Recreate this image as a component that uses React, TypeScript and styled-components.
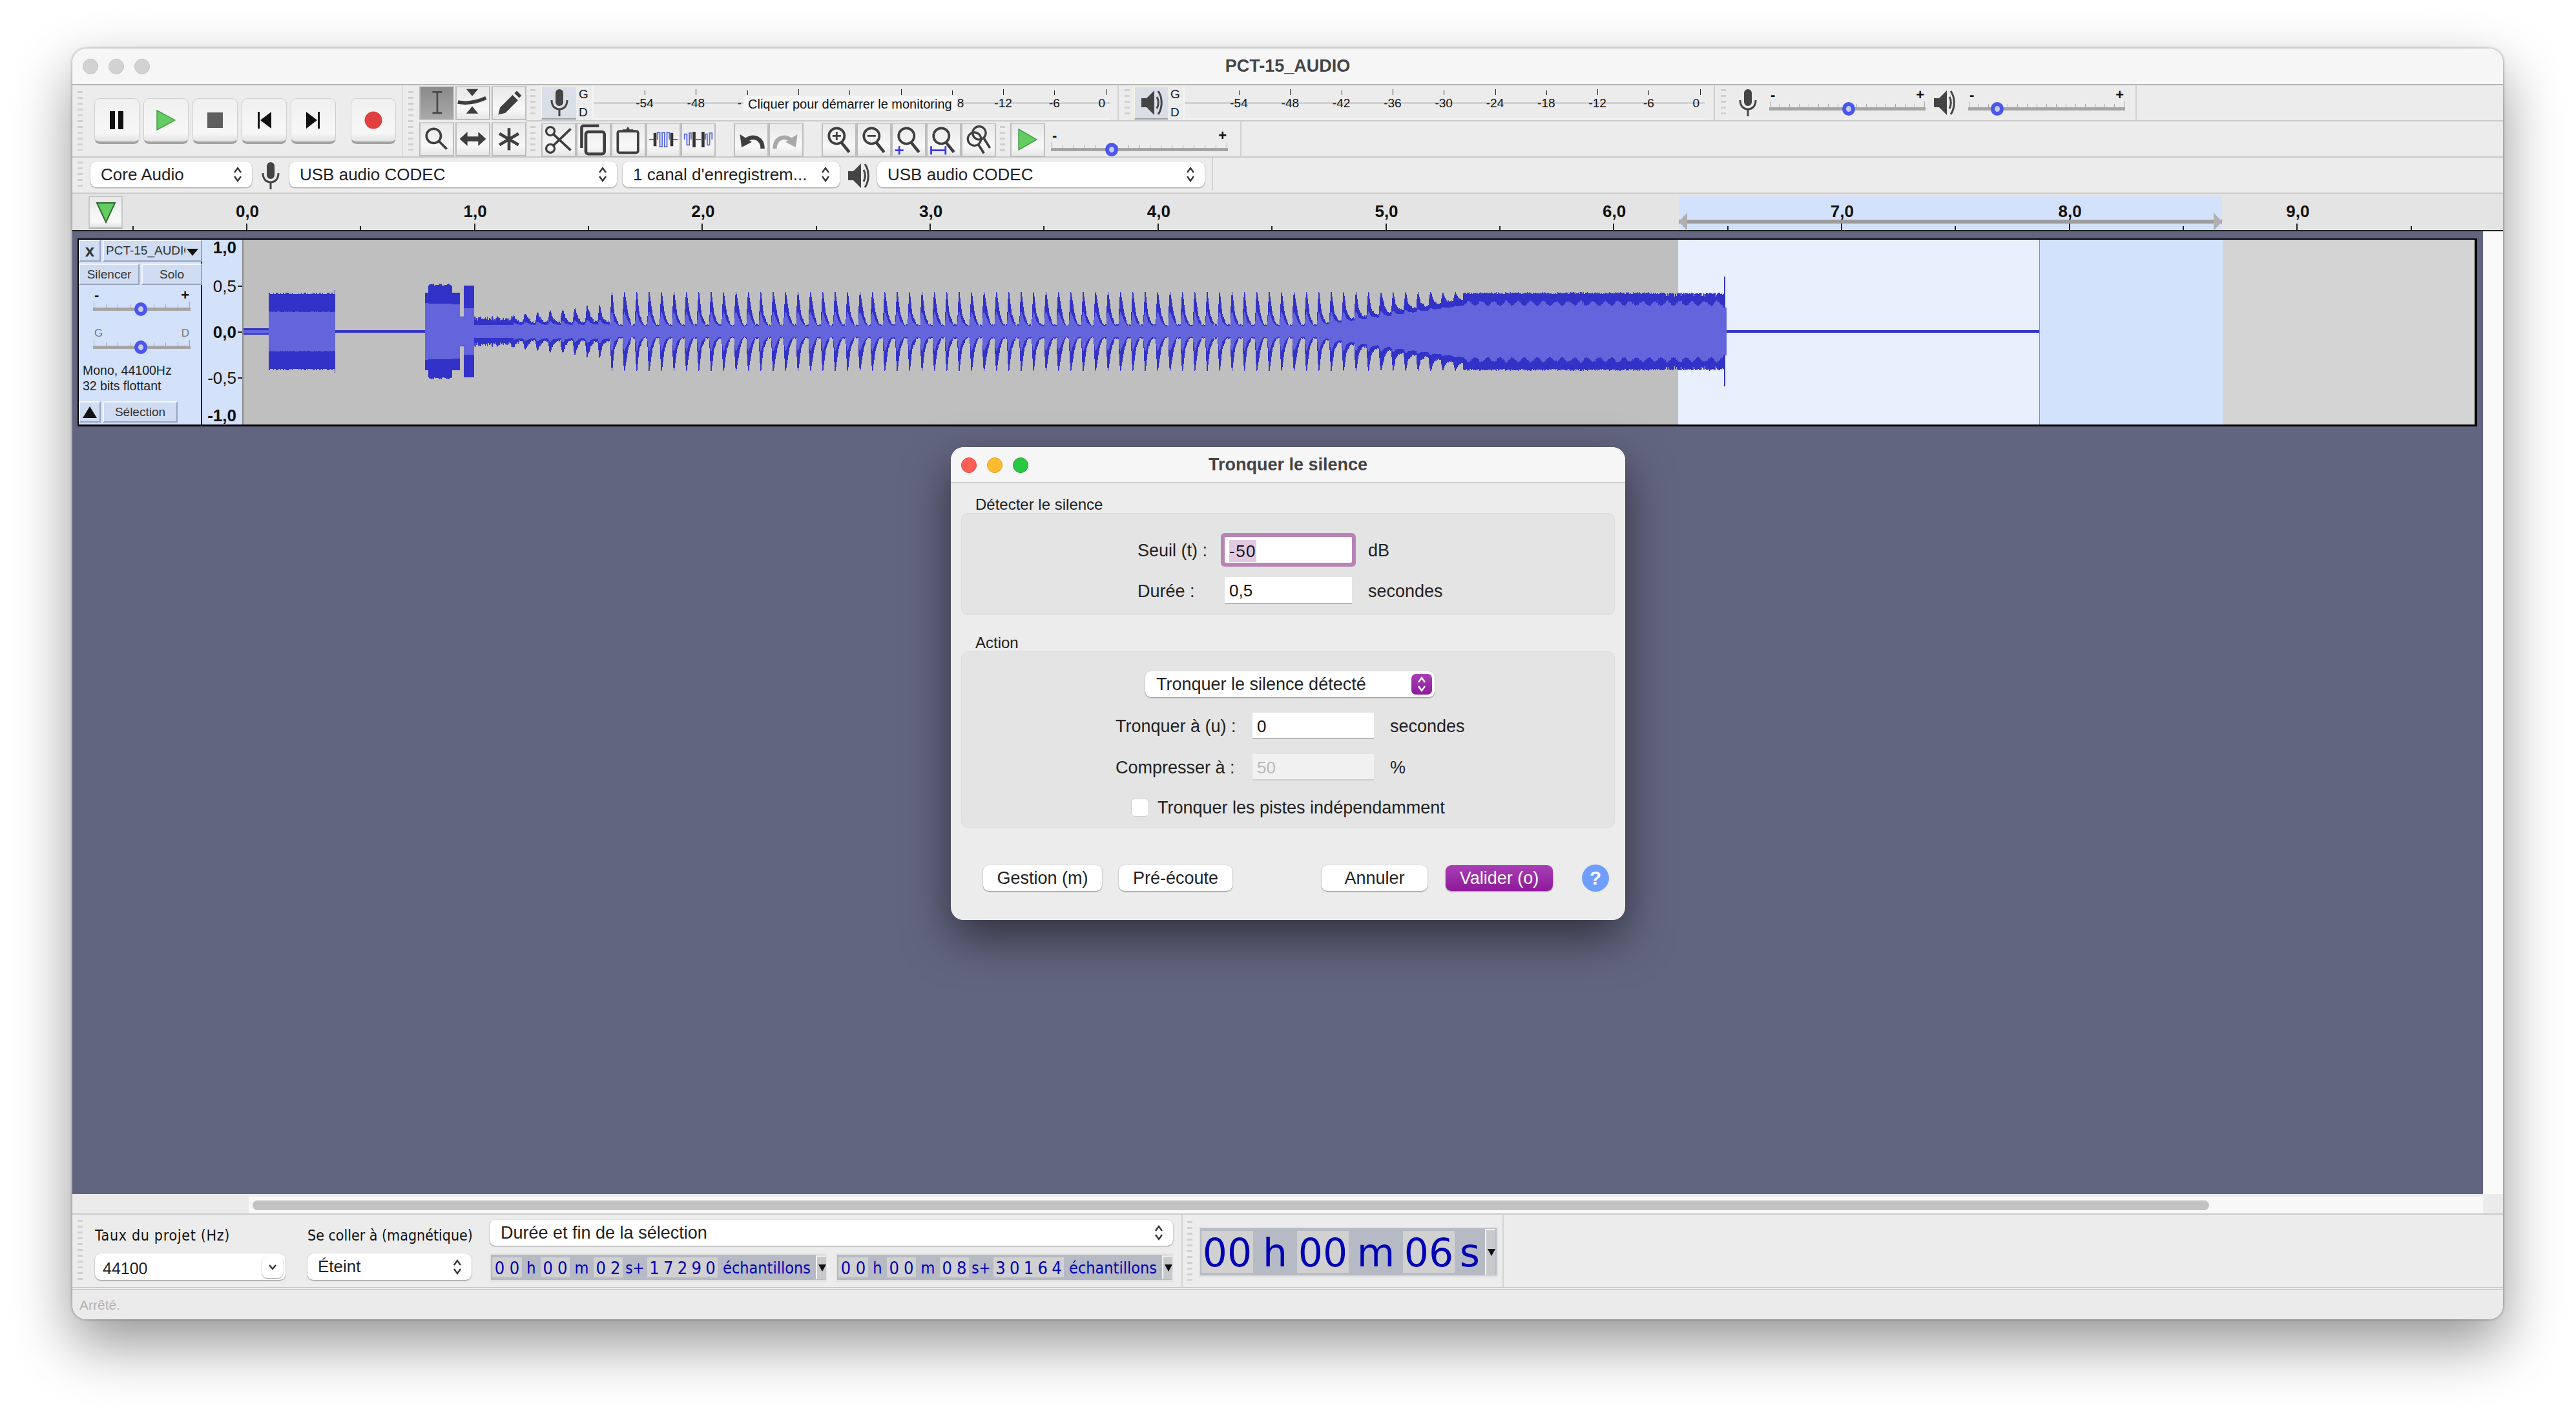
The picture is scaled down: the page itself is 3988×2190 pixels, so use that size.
import React from "react";
import styled, { createGlobalStyle } from "styled-components";

const GlobalStyle = createGlobalStyle`
  html, body {
    margin: 0;
    padding: 0;
    width: 3988px;
    height: 2190px;
    overflow: hidden;
    background: #fff;
    font-family: "Liberation Sans", Arial, sans-serif;
    color: #222;
  }
  * { box-sizing: border-box; }
`;

const Page = styled.div`
  width: 3988px;
  height: 2190px;
  padding: 75px 0 0 112px;
`;
const Win = styled.div`
  position: relative;
  width: 3763px;
  height: 1967px;
  display: flex;
  flex-direction: column;
  background: #ececec;
  border-radius: 22px;
  overflow: hidden;
`;
const WinShadow = styled.div`
  width: 3763px;
  border-radius: 22px;
  box-shadow: 0 38px 90px rgba(0, 0, 0, 0.42), 0 0 4px rgba(0, 0, 0, 0.45);
`;
const TitleBar = styled.div`
  height: 57px;
  flex: none;
  display: flex;
  align-items: center;
  justify-content: center;
  position: relative;
  background: #f6f6f6;
  border-bottom: 2px solid #b4b4b4;
  font-size: 27px;
  font-weight: 700;
  color: #444;
`;
const Lights = styled.div`
  position: absolute;
  left: 16px;
  top: 16px;
  display: flex;
  gap: 16px;
`;
const Light = styled.span<{ $c: string; $b: string }>`
  width: 24px;
  height: 24px;
  border-radius: 50%;
  background: ${(p) => p.$c};
  border: 1px solid ${(p) => p.$b};
`;

/* ---- top docks ---- */
const Grip = styled.div<{ $h: number; $mr: number }>`
  width: 8px;
  height: ${(p) => p.$h}px;
  flex: none;
  margin-right: ${(p) => p.$mr}px;
  background: repeating-linear-gradient(#d0d0d0 0 3px, transparent 3px 9px);
`;
const TopDock = styled.div`
  height: 112px;
  flex: none;
  display: flex;
  border-bottom: 2px solid #cbcbcb;
`;
const TransportBar = styled.div`
  width: 512px;
  flex: none;
  display: flex;
  align-items: center;
  padding-left: 8px;
  border-right: 1px solid #d4d4d4;
`;
const TransportBtn = styled.button<{ $ml?: number }>`
  width: 70px;
  height: 71px;
  flex: none;
  margin-left: ${(p) => p.$ml ?? 6}px;
  padding: 0;
  display: flex;
  align-items: center;
  justify-content: center;
  border: 1px solid #cfcfcf;
  border-bottom: 4px solid #a2a2a2;
  border-radius: 9px;
  background: linear-gradient(#f0f0f0, #f7f7f7 80%, #e2e2e2);
`;
const ToolsBar = styled.div`
  width: 191px;
  flex: none;
  display: flex;
  align-items: center;
  padding-left: 8px;
  border-right: 1px solid #d4d4d4;
`;
const ToolsGrid = styled.div`
  display: grid;
  grid-template-columns: repeat(3, 54px);
  grid-auto-rows: 53px;
  gap: 3px 2px;
`;
const IconBtn = styled.button<{ $on?: boolean; $w?: number; $h?: number }>`
  width: ${(p) => p.$w ?? 54}px;
  height: ${(p) => p.$h ?? 53}px;
  flex: none;
  padding: 0;
  display: flex;
  align-items: center;
  justify-content: center;
  border: 2px solid #bdbdbd;
  border-top-color: #cdcdcd;
  background: ${(p) =>
    p.$on
      ? "linear-gradient(#8a8a8a, #a9a9a9)"
      : "linear-gradient(#e9e9e9, #f8f8f8 70%, #e6e6e6)"};
`;
const RightCol = styled.div`
  flex: 1;
  display: flex;
  flex-direction: column;
  min-width: 0;
`;
const DockRow = styled.div`
  height: 56px;
  flex: none;
  display: flex;
  align-items: center;
  border-bottom: 2px solid #cbcbcb;
  &:last-child {
    border-bottom: 0;
  }
`;
const Bar = styled.div<{ $w: number; $pl?: number }>`
  width: ${(p) => p.$w}px;
  height: 100%;
  flex: none;
  display: flex;
  align-items: center;
  padding-left: ${(p) => p.$pl ?? 6}px;
  border-right: 2px solid #d0d0d0;
`;
const MeterBtn = styled.div<{ $w: number }>`
  width: ${(p) => p.$w}px;
  height: 52px;
  flex: none;
  display: flex;
  align-items: center;
  justify-content: center;
  background: #d9dee7;
  border-top: 1px solid #f8f6e4;
  border-left: 1px solid #f8f6e4;
  border-bottom: 2px solid #9a9ca3;
`;
const ChannelCol = styled.div<{ $w: number }>`
  width: ${(p) => p.$w}px;
  flex: none;
  display: flex;
  flex-direction: column;
  gap: 9px;
  padding-left: 4px;
  font-size: 19px;
  line-height: 19px;
  color: #111;
`;
const Scale = styled.div<{ $w: number }>`
  position: relative;
  width: ${(p) => p.$w}px;
  height: 52px;
  flex: none;
  border-left: 2px solid #f4f4f4;
  border-bottom: 2px solid #f4f4f4;
  &::before {
    content: "";
    position: absolute;
    left: 0;
    right: 0;
    top: 25px;
    height: 3px;
    background: #d2d2d2;
  }
`;
const MeterTick = styled.i<{ $x: number; $tall: boolean }>`
  position: absolute;
  left: ${(p) => p.$x}px;
  top: ${(p) => (p.$tall ? 5 : 7)}px;
  width: 1px;
  height: ${(p) => (p.$tall ? 9 : 7)}px;
  background: #222;
`;
const MeterLabel = styled.span<{ $x: number }>`
  position: absolute;
  left: ${(p) => p.$x}px;
  top: 16px;
  transform: translateX(-50%);
  font-size: 19px;
  line-height: 22px;
  color: #111;
`;
const MonitorHint = styled.div`
  position: absolute;
  left: 232px;
  top: 16px;
  width: 331px;
  height: 23px;
  padding-left: 7px;
  background: #f5f5f5;
  font-size: 20px;
  line-height: 24px;
  color: #111;
  white-space: nowrap;
`;
const SliderBox = styled.div<{ $w: number; $mt?: number; $ml?: number }>`
  position: relative;
  width: ${(p) => p.$w}px;
  flex: none;
  margin-top: ${(p) => p.$mt ?? 0}px;
  margin-left: ${(p) => p.$ml ?? 0}px;
`;
const SliderEnds = styled.div<{ $soft?: boolean }>`
  display: flex;
  justify-content: space-between;
  height: 20px;
  padding: 0 2px;
  font-size: ${(p) => (p.$soft ? 17 : 22)}px;
  line-height: 20px;
  font-weight: ${(p) => (p.$soft ? 400 : 700)};
  color: ${(p) => (p.$soft ? "#777" : "#111")};
`;
const SliderTicks = styled.div`
  display: flex;
  justify-content: space-between;
  align-items: flex-end;
  height: 9px;
  padding: 0 1px;
`;
const SliderTick = styled.i<{ $end: boolean }>`
  width: 1px;
  height: ${(p) => (p.$end ? 9 : 5)}px;
  background: #a8a8a8;
`;
const SliderRail = styled.div`
  height: 5px;
  background: #a5a5a5;
`;
const SliderThumb = styled.span<{ $x: number }>`
  position: absolute;
  left: ${(p) => p.$x - 10}px;
  bottom: -8px;
  width: 20px;
  height: 21px;
  border-radius: 50%;
  border: 6px solid #4a56ee;
  background: #c7cbe8;
`;

const Slider = ({
  w,
  thumb,
  mt,
  ml,
  ticks = 17,
  left = "-",
  right = "+",
  soft,
}: {
  w: number;
  thumb: number;
  mt?: number;
  ml?: number;
  ticks?: number;
  left?: string;
  right?: string;
  soft?: boolean;
}) => (
  <SliderBox $w={w} $mt={mt} $ml={ml}>
    <SliderEnds $soft={soft}>
      <span>{left}</span>
      <span>{right}</span>
    </SliderEnds>
    <SliderTicks>
      {Array.from({ length: ticks }).map((_, i) => (
        <SliderTick key={i} $end={i === 0 || i === ticks - 1} />
      ))}
    </SliderTicks>
    <SliderRail />
    <SliderThumb $x={thumb} />
  </SliderBox>
);

const BtnGroup = styled.div<{ $ml?: number }>`
  display: flex;
  flex: none;
  margin-left: ${(p) => p.$ml ?? 0}px;
`;

const DeviceRow = styled.div`
  height: 56px;
  flex: none;
  display: flex;
  align-items: flex-start;
  padding: 6px 0 0 8px;
  border-bottom: 2px solid #cbcbcb;
`;
const DeviceEnd = styled.div`
  width: 13px;
  height: 50px;
  flex: none;
  margin-top: -6px;
  border-right: 2px solid #d0d0d0;
`;
const SelectBox = styled.div<{ $w: number; $h?: number; $pl?: number; $fs?: number }>`
  width: ${(p) => p.$w}px;
  height: ${(p) => p.$h ?? 40}px;
  flex: none;
  display: flex;
  align-items: center;
  justify-content: space-between;
  padding: 0 14px 0 ${(p) => p.$pl ?? 16}px;
  background: #fff;
  border-radius: 9px;
  box-shadow: 0 1px 2px rgba(0, 0, 0, 0.38), 0 0 1px rgba(0, 0, 0, 0.2);
  font-size: ${(p) => p.$fs ?? 26}px;
  color: #222;
  white-space: nowrap;
`;
const RateText = styled.span`
  padding-top: 5px;
`;
const DeviceIcon = styled.div`
  width: 58px;
  height: 44px;
  flex: none;
  display: flex;
  align-items: center;
  justify-content: center;
`;
const DeviceGap = styled.div`
  width: 9px;
  flex: none;
`;

const RulerRow = styled.div`
  position: relative;
  height: 58px;
  flex: none;
  padding: 3px 0 0 25px;
  background: #e4e4e4;
  border-bottom: 2px solid #222;
`;
const RulerSel = styled.div`
  position: absolute;
  left: 2487px;
  top: 4px;
  width: 841px;
  bottom: 0;
  background: #d3e2fc;
`;
const SelSpan = styled.div`
  position: absolute;
  left: 0;
  right: 0;
  top: 36px;
  height: 6px;
  background: #9c9c9c;
  &::before,
  &::after {
    content: "";
    position: absolute;
    top: -11px;
    border-top: 14px solid transparent;
    border-bottom: 14px solid transparent;
  }
  &::before {
    left: 0;
    border-right: 13px solid #b0b0b0;
  }
  &::after {
    right: 0;
    border-left: 13px solid #b0b0b0;
  }
`;
const SpeedBtn = styled.div`
  width: 53px;
  height: 51px;
  display: flex;
  align-items: center;
  justify-content: center;
  background: linear-gradient(#e8e8e8, #fafafa 80%, #e2e2e2);
  border: 2px solid #c8c8c8;
  border-bottom-color: #b0b0b0;
`;
const RulerTick = styled.i<{ $x: number; $major: boolean }>`
  position: absolute;
  left: ${(p) => p.$x}px;
  bottom: 0;
  width: 2px;
  height: ${(p) => (p.$major ? 10 : 6)}px;
  background: #222;
`;
const RulerLabel = styled.span<{ $x: number }>`
  position: absolute;
  left: ${(p) => p.$x}px;
  top: 12px;
  transform: translateX(-50%);
  font-size: 26px;
  line-height: 30px;
  font-weight: 700;
  color: #111;
`;

/* ---- tracks ---- */
const TrackRegion = styled.div`
  flex: 1;
  display: flex;
  min-height: 0;
`;
const TrackPanel = styled.div`
  flex: 1;
  padding: 11px 0 0 8px;
  background: #62657f;
`;
const VScroll = styled.div`
  width: 31px;
  flex: none;
  background: #fafafa;
  border-left: 1px solid #ececec;
`;
const Track = styled.div`
  width: 3715px;
  height: 291px;
  display: flex;
  background: #d3e1fb;
  border: solid #000;
  border-width: 2px 4px 3px 2px;
`;
const LabelPanel = styled.div`
  width: 191px;
  flex: none;
  display: flex;
  flex-direction: column;
  background: #d3e1fb;
  border-right: 2px solid #222;
  color: #333;
  font-size: 19px;
`;
const LabelRow = styled.div<{ $h: number; $mb?: number }>`
  height: ${(p) => p.$h}px;
  flex: none;
  display: flex;
  gap: 3px;
  margin-bottom: ${(p) => p.$mb ?? 3}px;
`;
const LabelBtn = styled.div<{ $w: number; $bold?: boolean }>`
  width: ${(p) => p.$w}px;
  flex: none;
  display: flex;
  align-items: center;
  justify-content: center;
  background: #cfdcf2;
  border: solid;
  border-width: 2px 2px 2px 2px;
  border-color: #f3f6fc #9aa5ba #9aa5ba #f3f6fc;
  font-weight: ${(p) => (p.$bold ? 700 : 400)};
  font-size: ${(p) => (p.$bold ? 26 : 19)}px;
  white-space: nowrap;
  overflow: hidden;
`;
const TrackName = styled(LabelBtn)`
  justify-content: flex-start;
  padding-left: 3px;
  position: relative;
  &::after {
    content: "";
    position: absolute;
    right: 0;
    top: 0;
    bottom: 0;
    width: 24px;
    background: #cfdcf2;
  }
  &::before {
    content: "";
    position: absolute;
    z-index: 1;
    right: 4px;
    top: 12px;
    border-left: 9px solid transparent;
    border-right: 9px solid transparent;
    border-top: 11px solid #111;
  }
`;
const GainWrap = styled.div`
  padding: 3px 0 0 22px;
`;
const FormatInfo = styled.div`
  margin: 21px 0 0 6px;
  height: 60px;
  font-size: 19.5px;
  line-height: 24px;
  color: #222;
  white-space: nowrap;
`;
const VRuler = styled.div`
  position: relative;
  width: 64px;
  flex: none;
  background: #d3e1fb;
  border-right: 2px solid #8c8c8c;
`;
const VLabel = styled.span<{ $y: number; $bold: boolean }>`
  position: absolute;
  right: 9px;
  top: ${(p) => p.$y}px;
  transform: translateY(-50%);
  font-size: 26px;
  font-weight: ${(p) => (p.$bold ? 700 : 400)};
  color: #111;
  line-height: 30px;
`;
const VTick = styled.i<{ $y: number }>`
  position: absolute;
  right: 0;
  top: ${(p) => p.$y}px;
  width: 7px;
  height: 2px;
  background: #222;
`;
const WaveArea = styled.div`
  position: relative;
  flex: 1;
  display: flex;
  min-width: 0;
`;
const WaveRange = styled.div<{ $w?: number; $c: string }>`
  ${(p) => (p.$w ? `width: ${p.$w}px; flex: none;` : "flex: 1;")}
  background: ${(p) => p.$c};
`;
const WaveSvg = styled.svg`
  position: absolute;
  left: 0;
  top: 0;
`;

/* ---- bottom ---- */
const HScrollRow = styled.div`
  height: 32px;
  flex: none;
  padding: 4px 0 2px 273px;
  background: #ebebeb;
  border-bottom: 2px solid #cbcbcb;
`;
const HTrack = styled.div`
  width: 3459px;
  height: 26px;
  padding: 6px;
  background: #f8f8f8;
`;
const HThumb = styled.div`
  width: 3029px;
  height: 15px;
  border-radius: 8px;
  background: #c2c2c2;
`;
const SelectionDock = styled.div`
  height: 116px;
  flex: none;
  display: flex;
  border-bottom: 4px double #c4c4c4;
`;
const SelSection = styled.div`
  width: 1719px;
  flex: none;
  display: flex;
  padding: 8px 0 0 8px;
  border-right: 2px solid #d4d4d4;
`;
const SelGrid = styled.div`
  display: grid;
  grid-template-columns: 296px 249px 1060px;
  grid-template-rows: 40px 44px;
  column-gap: 33px;
  row-gap: 12px;
  margin-left: -1px;
`;
const SelLabel = styled.div<{ $ls?: number }>`
  font-family: "DejaVu Sans", sans-serif;
  font-size: 23px;
  font-stretch: condensed;
  letter-spacing: ${(p) => p.$ls ?? 0}px;
  line-height: 48px;
  color: #111;
  white-space: nowrap;
`;
const TimerRow = styled.div`
  display: flex;
  gap: 14px;
`;
const Timer = styled.div<{ $w: number; $h: number; $mt?: number }>`
  width: ${(p) => p.$w}px;
  height: ${(p) => p.$h}px;
  flex: none;
  display: flex;
  align-items: stretch;
  margin-top: ${(p) => p.$mt ?? 0}px;
  padding: 4px 2px 4px 2px;
  background: #b6bac4;
  border: 2px solid #e2e2e2;
  border-bottom-width: 3px;
  color: #0000b4;
  font-family: "DejaVu Sans", sans-serif;
`;
const TimerCell = styled.span<{ $w: number; $size: number; $cond?: boolean; $on?: boolean }>`
  width: ${(p) => p.$w}px;
  flex: none;
  display: flex;
  justify-content: space-around;
  align-items: center;
  padding-top: 2px;
  background: ${(p) => (p.$on ? "#d1d1d1" : "transparent")};
  font-size: ${(p) => p.$size}px;
  ${(p) => (p.$cond ? "font-stretch: condensed;" : "")}
  white-space: nowrap;
`;
const TimerDrop = styled.span`
  position: relative;
  width: 16px;
  flex: none;
  margin-top: -3px;
  margin-bottom: -3px;
  background: #c8c9cd;
  border-left: 2px solid #f4f4f4;
  border-top: 2px solid #f4f4f4;
  &::after {
    content: "";
    position: absolute;
    left: 2px;
    top: 50%;
    margin-top: -6px;
    border-left: 6px solid transparent;
    border-right: 6px solid transparent;
    border-top: 11px solid #111;
  }
`;
const ClockSection = styled.div`
  width: 497px;
  flex: none;
  display: flex;
  align-items: center;
  padding-left: 7px;
  border-right: 2px solid #d4d4d4;
`;
const StatusBar = styled.div`
  height: 46px;
  flex: none;
  padding-left: 11px;
  font-size: 21px;
  line-height: 48px;
  color: #b2b2b2;
  background: #ebebeb;
`;
const MiniChevron = styled.span`
  width: 32px;
  height: 34px;
  margin-right: -10px;
  display: flex;
  align-items: center;
  justify-content: center;
  border-radius: 8px;
  background: #fff;
  box-shadow: 0 1px 2px rgba(0, 0, 0, 0.4);
`;

/* ---- dialog ---- */
const Dialog = styled.div`
  position: absolute;
  left: 1360px;
  top: 617px;
  width: 1044px;
  height: 732px;
  background: #ececec;
  border-radius: 20px;
  overflow: hidden;
`;
const DialogShadow = styled.div`
  position: absolute;
  left: 1360px;
  top: 617px;
  width: 1044px;
  height: 732px;
  border-radius: 20px;
  box-shadow: 0 28px 70px rgba(0, 0, 0, 0.5);
`;
const DialogTitle = styled.div`
  position: relative;
  height: 56px;
  display: flex;
  align-items: center;
  justify-content: center;
  background: #f6f6f6;
  border-bottom: 2px solid #cdcdcd;
  font-size: 27px;
  font-weight: 700;
  color: #444;
`;
const DialogBody = styled.div`
  padding: 0 16px;
`;
const GroupLabel = styled.div<{ $h: number }>`
  height: ${(p) => p.$h}px;
  display: flex;
  align-items: flex-end;
  padding: 0 0 0 22px;
  font-size: 24px;
  line-height: 26px;
  color: #222;
`;
const GroupBox = styled.div<{ $h: number; $pt: number }>`
  height: ${(p) => p.$h}px;
  padding-top: ${(p) => p.$pt}px;
  background: #e4e4e4;
  border: 1px solid #dedede;
  border-radius: 10px;
`;
const FormRow = styled.div<{ $pl: number; $mb?: number; $lw: number }>`
  display: flex;
  align-items: center;
  padding-left: ${(p) => p.$pl}px;
  margin-bottom: ${(p) => p.$mb ?? 0}px;
  font-size: 27px;
  color: #222;
  & > label {
    width: ${(p) => p.$lw}px;
    flex: none;
    padding-top: 2px;
    white-space: nowrap;
  }
`;
const Unit = styled.span`
  padding-top: 2px;
`;
const TextField = styled.div<{ $w: number; $h: number; $off?: boolean; $focus?: boolean }>`
  width: ${(p) => p.$w}px;
  height: ${(p) => p.$h}px;
  flex: none;
  margin-right: 25px;
  padding: 3px 0 0 7px;
  display: flex;
  align-items: center;
  background: ${(p) => (p.$off ? "#f1f1f1" : "#fff")};
  color: ${(p) => (p.$off ? "#b9b9b9" : "#111")};
  font-size: 26px;
  border-bottom: 2px solid ${(p) => (p.$off ? "#cfcfcf" : "#b8b8b8")};
  ${(p) =>
    p.$focus
      ? "box-shadow: 0 0 0 6px #b784b5; border-radius: 2px; border-bottom: 0; position: relative;"
      : ""}
`;
const SelectedText = styled.span`
  background: #e2c8e3;
  line-height: 34px;
  letter-spacing: 1.5px;
`;
const PurpleCap = styled.span`
  width: 32px;
  height: 32px;
  margin-right: -10px;
  display: flex;
  align-items: center;
  justify-content: center;
  border-radius: 7px;
  background: linear-gradient(#a83fb5, #8e1a9a);
`;
const CheckBox = styled.span`
  width: 28px;
  height: 28px;
  flex: none;
  margin-right: 13px;
  background: #fff;
  border: 1px solid #d0d0d0;
  border-radius: 6px;
`;
const Footer = styled.div`
  display: flex;
  align-items: center;
  margin-top: 57px;
  padding-left: 34px;
`;
const DlgBtn = styled.button<{ $w: number; $ml?: number; $primary?: boolean }>`
  width: ${(p) => p.$w}px;
  height: 40px;
  flex: none;
  margin-left: ${(p) => p.$ml ?? 0}px;
  padding: 0;
  border: 0;
  border-radius: 9px;
  font: 27px "Liberation Sans", Arial, sans-serif;
  color: ${(p) => (p.$primary ? "#fff" : "#222")};
  background: ${(p) => (p.$primary ? "linear-gradient(#a83fb5, #8e1a9a)" : "#fff")};
  box-shadow: 0 1px 2px rgba(0, 0, 0, 0.38), 0 0 1px rgba(0, 0, 0, 0.2);
`;
const HelpBtn = styled.span`
  width: 42px;
  height: 42px;
  flex: none;
  margin-left: 45px;
  display: flex;
  align-items: center;
  justify-content: center;
  border-radius: 50%;
  background: #6f9eff;
  color: #fff;
  font-size: 30px;
  font-weight: 700;
`;

/* ---- drawings ---- */
const INK = "#3f3f3f";
const Glyph = ({ children, size = 54 }: { children: React.ReactNode; size?: number }) => (
  <svg width={size} height={size} viewBox="0 0 54 54" fill="none">
    {children}
  </svg>
);
const Mic = ({ w = 30, h = 44, c = "#444" }: { w?: number; h?: number; c?: string }) => (
  <svg width={w} height={h} viewBox="0 0 30 44" fill="none">
    <rect x="9" y="1" width="12" height="26" rx="6" fill={c} />
    <path d="M3 18c0 9 5 14 12 14s12-5 12-14" stroke={c} strokeWidth="3" />
    <path d="M15 32v11" stroke={c} strokeWidth="3" />
  </svg>
);
const Speaker = ({ w = 34, h = 44, c = "#444" }: { w?: number; h?: number; c?: string }) => (
  <svg width={w} height={h} viewBox="0 0 34 44" fill="none">
    <path d="M1 15h8L21 3v38L9 29H1z" fill={c} />
    <path d="M25 13c3 5 3 13 0 18M27 4c7 10 7 26 0 36" stroke={c} strokeWidth="3" />
  </svg>
);
const UpDown = ({ c = "#333" }: { c?: string }) => (
  <svg width="16" height="26" viewBox="0 0 16 26" fill="none">
    <path d="M3 10l5-7 5 7M3 16l5 7 5-7" stroke={c} strokeWidth="2.4" />
  </svg>
);
const Lens = ({ sw = 4 }: { sw?: number }) => (
  <>
    <circle cx="23" cy="21" r="13" stroke={INK} strokeWidth={sw} />
    <path d="M31 32l13 16" stroke={INK} strokeWidth={sw + 1} />
  </>
);

const icons: Record<string, React.ReactNode> = {
  ibeam: <path d="M20 9h16M28 9v35M20 44h16" stroke="#4a4a4a" strokeWidth="3" />,
  envelope: (
    <>
      <path d="M16 4h20L26 16zM16 45h20L26 33z" fill={INK} />
      <path d="M2 26c16 3 30 1 47-7" stroke={INK} strokeWidth="6" />
    </>
  ),
  pencil: (
    <path d="M9 47l3-12 21-21 9 9-21 21zM36 11l4-4 8 8-4 4z" fill={INK} />
  ),
  zoomTool: (
    <>
      <circle cx="22" cy="22" r="12" stroke={INK} strokeWidth="4" />
      <path d="M31 31l13 13" stroke={INK} strokeWidth="4" />
    </>
  ),
  slide: <path d="M5 27l13-12v8h18v-8l13 12-13 12v-8H18v8z" fill={INK} />,
  multi: <path d="M27 9v37M11 18l32 19M43 18L11 37" stroke={INK} strokeWidth="5" />,
  cut: (
    <>
      <circle cx="13" cy="13" r="7" stroke={INK} strokeWidth="3.5" />
      <circle cx="13" cy="42" r="7" stroke={INK} strokeWidth="3.5" />
      <path d="M18 18l29 27M18 37L47 9" stroke={INK} strokeWidth="4" />
    </>
  ),
  copy: (
    <>
      <rect x="14" y="14" width="31" height="37" rx="4" stroke={INK} strokeWidth="5" />
      <path d="M7 41V7a3 3 0 0 1 3-3h26" stroke={INK} strokeWidth="5" />
    </>
  ),
  paste: (
    <>
      <rect x="9" y="13" width="34" height="36" rx="3" stroke={INK} strokeWidth="4" />
      <path d="M17 15v-5h6l3-5 3 5h6v5z" fill={INK} />
    </>
  ),
  trim: (
    <>
      <path d="M3 27h9M42 27h9" stroke="#5a6be8" strokeWidth="2" />
      <path d="M13 16v22M41 16v22" stroke="#333" strokeWidth="5" />
      <path d="M17 27v-12h4v24h4V15h4v24h4V15h4v12" stroke="#5a6be8" strokeWidth="2" />
    </>
  ),
  silence: (
    <>
      <path d="M4 27v-9h4v18h4V16h3v11M39 27v-9h3v18h4V16h4v11" stroke="#5a6be8" strokeWidth="2" />
      <path d="M20 14v26M35 14v26" stroke="#333" strokeWidth="5" />
      <path d="M22 27h12" stroke="#5a6be8" strokeWidth="2" />
    </>
  ),
  undo: (
    <>
      <path d="M46 42c0-16-14-24-28-14" stroke={INK} strokeWidth="7" />
      <path d="M8 18l3 22 17-9z" fill={INK} />
    </>
  ),
  redo: (
    <>
      <path d="M8 42c0-16 14-24 28-14" stroke="#a8a8a8" strokeWidth="7" />
      <path d="M46 18l-3 22-17-9z" fill="#a8a8a8" />
    </>
  ),
  zoomIn: (
    <>
      <Lens />
      <path d="M23 14v14M16 21h14" stroke={INK} strokeWidth="3" />
    </>
  ),
  zoomOut: (
    <>
      <Lens />
      <path d="M16 21h14" stroke={INK} strokeWidth="3" />
    </>
  ),
  zoomSel: (
    <>
      <Lens />
      <path d="M11 38v14M4 45h14" stroke="#3a3ae0" strokeWidth="3" />
    </>
  ),
  zoomFit: (
    <>
      <Lens />
      <path d="M6 38v14M30 38v14M6 45h24" stroke="#3a3ae0" strokeWidth="3" />
    </>
  ),
  zoomToggle: (
    <>
      <circle cx="28" cy="16" r="11" stroke={INK} strokeWidth="3.5" />
      <circle cx="20" cy="26" r="11" stroke={INK} strokeWidth="3.5" />
      <path d="M27 36l9 14M36 25l10 16" stroke={INK} strokeWidth="4" />
    </>
  ),
};

const Tool = ({ name, on, w, h }: { name: string; on?: boolean; w?: number; h?: number }) => (
  <IconBtn $on={on} $w={w} $h={h}>
    <Glyph>{icons[name]}</Glyph>
  </IconBtn>
);

const PlayGlyph = ({ h = 32 }: { h?: number }) => (
  <svg width="30" height={h} viewBox="0 0 30 32" preserveAspectRatio="none">
    <path d="M1 1l28 15L1 31z" fill="#63cc63" stroke="#4a9f4a" strokeWidth="1.5" />
  </svg>
);

/* waveform, same random sequence on every run */
const noise = (x: number) => {
  const s = Math.sin(x * 12.9898) * 43758.5453;
  return s - Math.floor(s);
};
const burstShape = (x: number) => {
  const q = (((x - 944) % 19.2) + 19.2) % 19.2;
  const p = q / 19.2;
  const skew = 0.85 + 0.3 * noise(Math.floor((x - 944) / 19.2));
  if (p < 0.12) return Math.pow(p / 0.12, 0.7);
  if (p < 0.18) return 1;
  if (p < 0.42 * skew) return 1 - ((p - 0.18) / (0.42 * skew - 0.18)) * 0.68;
  if (p < 0.72) return 0.32 * (1 - (p - 0.42 * skew) / (0.72 - 0.42 * skew));
  return 0;
};
const envelope = (x: number): [number, number] => {
  const n = noise(x);
  const m = noise(x + 311);
  if (x < 416) return [5, 2.5];
  if (x < 519) return [x === 518 ? 64 : 58 + (n > 0.7 ? 2 : 0), 30 + m];
  if (x < 658) return [1.8, 1];
  if (x < 663) return [60, 44];
  if (x < 700) return [71 + (Math.floor(x / 4) % 3) + n, 43];
  if (x < 712) return [60, 42];
  if (x < 718) return [23, 22];
  if (x < 734) return [71, 36];
  if (x < 795) return [17 + 7 * n, 10];
  if (x < 944) {
    const t = (x - 795) / 149;
    const top = 24 + 16 * t;
    const peak = 13 + (top - 13) * burstShape(x) + 4 * n;
    return [peak, 10 + (peak - 13) * 0.3];
  }
  if (x < 2265) {
    const t = x < 2035 ? 0 : (x - 2035) / 230;
    const low = 9 + 40 * t;
    const b = burstShape(x);
    const peak = low + (61 - low) * b + 3 * n * (1 - b) - 2 * m * t;
    return [Math.min(peak, 61), 8 + 32 * t + (peak - low) * 0.42 * (1 - t * 0.8)];
  }
  if (x < 2668) {
    const chop = x > 2560 && n > 0.72 ? 7 * m : 0;
    const bump = 5 * Math.sin(((x - 944) / 19.2) * 2 * Math.PI);
    const rms = 42 + bump * 0.7 + 3 * n;
    return [58 + 3 * n - chop, Math.min(rms, 50)];
  }
  if (x < 2671) return [x >= 2669 ? 85 : 58, 36];
  if (x < 2673) return [37, 37];
  return [1.8, 1];
};
const buildPaths = () => {
  const cy = 142;
  let dark = "";
  let light = "";
  for (let x = 377; x < 3157; x++) {
    const [peak, rms] = envelope(x);
    const px = x - 377 + 0.5;
    dark += `M${px} ${(cy - peak).toFixed(1)}V${(cy + peak).toFixed(1)}`;
    if (rms > 1) light += `M${px} ${(cy - rms).toFixed(1)}V${(cy + rms).toFixed(1)}`;
  }
  return { dark, light };
};
const wavePaths = buildPaths();

const METER_DB = ["-54", "-48", "-42", "-36", "-30", "-24", "-18", "-12", "-6", "0"];

const MeterScale = ({
  w,
  start,
  labels,
  children,
}: {
  w: number;
  start: number;
  labels: string[];
  children?: React.ReactNode;
}) => (
  <Scale $w={w}>
    {labels.map((db, i) => {
      const x = start + 79.3 * i;
      return (
        <React.Fragment key={i}>
          <MeterTick $x={x} $tall={i % 2 === 1 || i === 9} />
          {db && <MeterLabel $x={db === "0" ? x - 6 : x}>{db}</MeterLabel>}
        </React.Fragment>
      );
    })}
    {children}
  </Scale>
);

const RULER_ZERO = 269;
const RULER_STEP = 352.7;
const rulerTicks = Array.from({ length: 21 })
  .map((_, i) => ({
    x: RULER_ZERO - RULER_STEP / 2 + (i * RULER_STEP) / 2,
    major: i % 2 === 1,
  }))
  .filter((t) => t.x < 3750);
const rulerLabels = ["0,0", "1,0", "2,0", "3,0", "4,0", "5,0", "6,0", "7,0", "8,0", "9,0"];

const SmallTimer = ({ sec, samples }: { sec: string; samples: string }) => {
  const digits = (s: string, w: number) => (
    <TimerCell $w={w} $size={27} $cond $on>
      {s.split("").map((d, i) => (
        <span key={i}>{d}</span>
      ))}
    </TimerCell>
  );
  return (
    <Timer $w={522} $h={44}>
      {digits("00", 46)}
      <TimerCell $w={29} $size={25} $cond>h</TimerCell>
      {digits("00", 45)}
      <TimerCell $w={37} $size={25} $cond>m</TimerCell>
      {digits(sec, 45)}
      <TimerCell $w={38} $size={24} $cond>s+</TimerCell>
      {digits(samples, 109)}
      <TimerCell $w={152} $size={25} $cond>échantillons</TimerCell>
      <TimerDrop />
    </Timer>
  );
};

const App = () => (
  <Page>
    <GlobalStyle />
    <WinShadow>
      <Win>
        <TitleBar>
          <Lights>
            <Light $c="#d2d2d2" $b="#c4c4c4" />
            <Light $c="#d2d2d2" $b="#c4c4c4" />
            <Light $c="#d2d2d2" $b="#c4c4c4" />
          </Lights>
          PCT-15_AUDIO
        </TitleBar>

        <TopDock>
          <TransportBar>
            <Grip $h={92} $mr={12} />
            <TransportBtn $ml={6}>
              <svg width="26" height="28" viewBox="0 0 26 28">
                <path d="M2 0h8v28H2zM15 0h8v28h-8z" fill="#111" />
              </svg>
            </TransportBtn>
            <TransportBtn>
              <PlayGlyph />
            </TransportBtn>
            <TransportBtn>
              <svg width="26" height="26" viewBox="0 0 26 26">
                <rect width="24" height="24" x="1" y="1" fill="#5f5f5f" />
              </svg>
            </TransportBtn>
            <TransportBtn>
              <svg width="26" height="26" viewBox="0 0 26 26">
                <path d="M3 0h3v26H3zM24 0v26L7 13z" fill="#111" />
              </svg>
            </TransportBtn>
            <TransportBtn>
              <svg width="26" height="26" viewBox="0 0 26 26">
                <path d="M20 0h3v26h-3zM2 0v26l17-13z" fill="#111" />
              </svg>
            </TransportBtn>
            <TransportBtn $ml={23}>
              <svg width="28" height="28" viewBox="0 0 28 28">
                <circle cx="14" cy="14" r="13.5" fill="#e04040" />
              </svg>
            </TransportBtn>
          </TransportBar>

          <ToolsBar>
            <Grip $h={92} $mr={9} />
            <ToolsGrid>
              <Tool name="ibeam" on />
              <Tool name="envelope" />
              <Tool name="pencil" />
              <Tool name="zoomTool" />
              <Tool name="slide" />
              <Tool name="multi" />
            </ToolsGrid>
          </ToolsBar>

          <RightCol>
            <DockRow>
              <Bar $w={917}>
                <Grip $h={42} $mr={9} />
                <MeterBtn $w={54}>
                  <Mic />
                </MeterBtn>
                <ChannelCol $w={25}>
                  <span>G</span>
                  <span>D</span>
                </ChannelCol>
                <MeterScale w={802} start={79} labels={["-54", "-48", "", "", "", "", "", "-12", "-6", "0"]}>
                  <MeterLabel $x={226}>-</MeterLabel>
                  <MonitorHint>Cliquer pour démarrer le monitoring</MonitorHint>
                  <MeterLabel $x={568}>8</MeterLabel>
                </MeterScale>
              </Bar>
              <Bar $w={923} $pl={9}>
                <Grip $h={42} $mr={7} />
                <MeterBtn $w={52}>
                  <Speaker />
                </MeterBtn>
                <ChannelCol $w={24}>
                  <span>G</span>
                  <span>D</span>
                </ChannelCol>
                <MeterScale w={807} start={84} labels={METER_DB} />
              </Bar>
              <Bar $w={653} $pl={9}>
                <Grip $h={42} $mr={19} />
                <Mic h={46} />
                <Slider w={242} thumb={123} ml={18} mt={-10} />
                <BtnGroup $ml={12}>
                  <Speaker h={46} />
                </BtnGroup>
                <Slider w={243} thumb={45} ml={20} mt={-10} />
              </Bar>
            </DockRow>
            <DockRow>
              <Bar $w={1107}>
                <Grip $h={42} $mr={9} />
                <BtnGroup>
                  <Tool name="cut" />
                  <Tool name="copy" />
                  <Tool name="paste" />
                  <Tool name="trim" />
                  <Tool name="silence" />
                </BtnGroup>
                <BtnGroup $ml={28}>
                  <Tool name="undo" />
                  <Tool name="redo" />
                </BtnGroup>
                <BtnGroup $ml={28}>
                  <Tool name="zoomIn" />
                  <Tool name="zoomOut" />
                  <Tool name="zoomSel" />
                  <Tool name="zoomFit" />
                  <Tool name="zoomToggle" />
                </BtnGroup>
                <BtnGroup $ml={6}>
                  <Grip $h={42} $mr={8} />
                </BtnGroup>
                <IconBtn>
                  <PlayGlyph h={34} />
                </IconBtn>
                <Slider w={274} thumb={94} ml={9} mt={2} />
              </Bar>
            </DockRow>
          </RightCol>
        </TopDock>

        <DeviceRow>
          <Grip $h={42} $mr={12} />
          <SelectBox $w={250}>
            Core Audio
            <UpDown />
          </SelectBox>
          <DeviceIcon>
            <Mic h={44} w={30} />
          </DeviceIcon>
          <SelectBox $w={507}>
            USB audio CODEC
            <UpDown />
          </SelectBox>
          <DeviceGap />
          <SelectBox $w={336}>
            1 canal d'enregistrem...
            <UpDown />
          </SelectBox>
          <DeviceIcon>
            <Speaker />
          </DeviceIcon>
          <SelectBox $w={507}>
            USB audio CODEC
            <UpDown />
          </SelectBox>
          <DeviceEnd />
        </DeviceRow>

        <RulerRow>
          <RulerSel>
            <SelSpan />
          </RulerSel>
          <SpeedBtn>
            <svg width="32" height="34" viewBox="0 0 32 34">
              <path d="M2 2h28L16 32z" fill="#63cc63" stroke="#2f6b2f" strokeWidth="2" />
            </svg>
          </SpeedBtn>
          {rulerTicks.map((t) => (
            <RulerTick key={t.x} $x={t.x} $major={t.major} />
          ))}
          {rulerLabels.map((l, i) => (
            <RulerLabel key={l} $x={RULER_ZERO + 2 + RULER_STEP * i}>
              {l}
            </RulerLabel>
          ))}
        </RulerRow>

        <TrackRegion>
          <TrackPanel>
            <Track>
              <LabelPanel>
                <LabelRow $h={34}>
                  <LabelBtn $w={34} $bold>x</LabelBtn>
                  <TrackName $w={154}>PCT-15_AUDIO</TrackName>
                </LabelRow>
                <LabelRow $h={33}>
                  <LabelBtn $w={94}>Silencer</LabelBtn>
                  <LabelBtn $w={94}>Solo</LabelBtn>
                </LabelRow>
                <GainWrap>
                  <Slider w={151} thumb={74} ticks={9} />
                  <Slider w={151} thumb={74} ticks={9} mt={25} left="G" right="D" soft />
                </GainWrap>
                <FormatInfo>
                  Mono, 44100Hz
                  <br />
                  32 bits flottant
                </FormatInfo>
                <LabelRow $h={33} $mb={0}>
                  <LabelBtn $w={34}>
                    <svg width="22" height="18" viewBox="0 0 22 18">
                      <path d="M11 0l11 18H0z" fill="#111" />
                    </svg>
                  </LabelBtn>
                  <LabelBtn $w={116}>Sélection</LabelBtn>
                </LabelRow>
              </LabelPanel>
              <VRuler>
                <VLabel $y={12} $bold>1,0</VLabel>
                <VLabel $y={72} $bold={false}>0,5</VLabel>
                <VTick $y={71} />
                <VLabel $y={143} $bold>0,0</VLabel>
                <VTick $y={142} />
                <VLabel $y={214} $bold={false}>-0,5</VLabel>
                <VTick $y={213} />
                <VLabel $y={272} $bold>-1,0</VLabel>
              </VRuler>
              <WaveArea>
                <WaveRange $w={2221} $c="#bfbfbf" />
                <WaveRange $w={559} $c="#e9f0fd" />
                <WaveRange $w={1} $c="#8c8f96" />
                <WaveRange $w={283} $c="#d3e2fc" />
                <WaveRange $c="#d4d4d4" />
                <WaveSvg width="2790" height="285" viewBox="0 0 2790 285">
                  <path d={wavePaths.dark} stroke="#3232c8" strokeWidth="1" shapeRendering="crispEdges" />
                  <path d={wavePaths.light} stroke="#6464dc" strokeWidth="1" shapeRendering="crispEdges" />
                </WaveSvg>
              </WaveArea>
            </Track>
          </TrackPanel>
          <VScroll />
        </TrackRegion>

        <HScrollRow>
          <HTrack>
            <HThumb />
          </HTrack>
        </HScrollRow>

        <SelectionDock>
          <SelSection>
            <Grip $h={96} $mr={20} />
            <SelGrid>
              <SelLabel $ls={0.7}>Taux du projet (Hz)</SelLabel>
              <SelLabel>Se coller à (magnétique)</SelLabel>
              <SelectBox $w={1058} $fs={27} $pl={17}>
                Durée et fin de la sélection
                <UpDown />
              </SelectBox>
              <SelectBox $w={295} $h={41} $pl={12} $fs={25}>
                <RateText>44100</RateText>
                <MiniChevron>
                  <svg width="14" height="10" viewBox="0 0 14 10" fill="none">
                    <path d="M2 2l5 6 5-6" stroke="#333" strokeWidth="2.4" />
                  </svg>
                </MiniChevron>
              </SelectBox>
              <SelectBox $w={254} $h={41}>
                Éteint
                <UpDown />
              </SelectBox>
              <TimerRow>
                <SmallTimer sec="02" samples="17290" />
                <SmallTimer sec="08" samples="30164" />
              </TimerRow>
            </SelGrid>
          </SelSection>
          <ClockSection>
            <Grip $h={92} $mr={10} />
            <Timer $w={463} $h={78} $mt={4}>
              <TimerCell $w={80} $size={60} $on>
                00
              </TimerCell>
              <TimerCell $w={68} $size={60}>h</TimerCell>
              <TimerCell $w={80} $size={60} $on>
                00
              </TimerCell>
              <TimerCell $w={84} $size={60}>m</TimerCell>
              <TimerCell $w={80} $size={60} $on>
                06
              </TimerCell>
              <TimerCell $w={47} $size={60}>s</TimerCell>
              <TimerDrop />
            </Timer>
          </ClockSection>
        </SelectionDock>

        <StatusBar>Arrêté.</StatusBar>

        <DialogShadow />
        <Dialog>
          <DialogTitle>
            <Lights>
              <Light $c="#ff5f57" $b="#e5483f" />
              <Light $c="#febc2e" $b="#dd9f1f" />
              <Light $c="#28c840" $b="#1fa833" />
            </Lights>
            Tronquer le silence
          </DialogTitle>
          <DialogBody>
            <GroupLabel $h={46}>Détecter le silence</GroupLabel>
            <GroupBox $h={158} $pt={36}>
              <FormRow $pl={272} $lw={135} $mb={22}>
                <label>Seuil (t) :</label>
                <TextField $w={197} $h={40} $focus>
                  <SelectedText>-50</SelectedText>
                </TextField>
                <Unit>dB</Unit>
              </FormRow>
              <FormRow $pl={272} $lw={135}>
                <label>Durée :</label>
                <TextField $w={197} $h={42}>0,5</TextField>
                <Unit>secondes</Unit>
              </FormRow>
            </GroupBox>
            <GroupLabel $h={56}>Action</GroupLabel>
            <GroupBox $h={273} $pt={30}>
              <FormRow $pl={284} $lw={0} $mb={24}>
                <SelectBox $w={448} $pl={17} $fs={27}>
                  Tronquer le silence détecté
                  <PurpleCap>
                    <UpDown c="#fff" />
                  </PurpleCap>
                </SelectBox>
              </FormRow>
              <FormRow $pl={238} $lw={212} $mb={23}>
                <label>Tronquer à (u) :</label>
                <TextField $w={188} $h={41}>0</TextField>
                <Unit>secondes</Unit>
              </FormRow>
              <FormRow $pl={238} $lw={212} $mb={25}>
                <label>Compresser à :</label>
                <TextField $w={188} $h={41} $off>50</TextField>
                <Unit>%</Unit>
              </FormRow>
              <FormRow $pl={262} $lw={0}>
                <CheckBox />
                <Unit>Tronquer les pistes indépendamment</Unit>
              </FormRow>
            </GroupBox>
            <Footer>
              <DlgBtn $w={184}>Gestion (m)</DlgBtn>
              <DlgBtn $w={176} $ml={26}>Pré-écoute</DlgBtn>
              <DlgBtn $w={164} $ml={138}>Annuler</DlgBtn>
              <DlgBtn $w={166} $ml={28} $primary>Valider (o)</DlgBtn>
              <HelpBtn>?</HelpBtn>
            </Footer>
          </DialogBody>
        </Dialog>
      </Win>
    </WinShadow>
  </Page>
);

export default App;
